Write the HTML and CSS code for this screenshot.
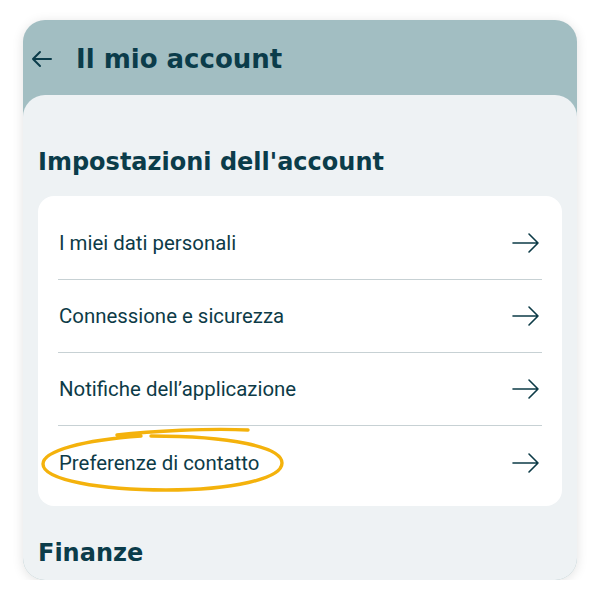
FILE: index.html
```html
<!DOCTYPE html>
<html lang="it">
<head>
<meta charset="utf-8">
<link rel="stylesheet" href="styles.css">
</head>
<body>
<div class="phone">
  <header class="topbar">
    <svg class="back" width="22" height="18" viewBox="0 0 22 18"><path d="M20 9H2M9 2L2 9l7 7" fill="none" stroke="#0b3c4a" stroke-width="2" stroke-linecap="round" stroke-linejoin="round"/></svg>
    <h1 class="title">Il mio account</h1>
  </header>
  <main class="panel">
    <h2 class="section">Impostazioni dell'account</h2>
    <ul class="card">
      <li class="row"><span>I miei dati personali</span><svg class="arrow" width="28" height="22" viewBox="0 0 28 22"><path d="M1 11h25M17 2l9 9-9 9" fill="none" stroke="#0d3b47" stroke-width="1.6" stroke-linecap="round" stroke-linejoin="round"/></svg></li>
      <li class="row"><span>Connessione e sicurezza</span><svg class="arrow" width="28" height="22" viewBox="0 0 28 22"><path d="M1 11h25M17 2l9 9-9 9" fill="none" stroke="#0d3b47" stroke-width="1.6" stroke-linecap="round" stroke-linejoin="round"/></svg></li>
      <li class="row"><span>Notifiche dell’applicazione</span><svg class="arrow" width="28" height="22" viewBox="0 0 28 22"><path d="M1 11h25M17 2l9 9-9 9" fill="none" stroke="#0d3b47" stroke-width="1.6" stroke-linecap="round" stroke-linejoin="round"/></svg></li>
      <li class="row marked"><span>Preferenze di contatto</span><svg class="arrow" width="28" height="22" viewBox="0 0 28 22"><path d="M1 11h25M17 2l9 9-9 9" fill="none" stroke="#0d3b47" stroke-width="1.6" stroke-linecap="round" stroke-linejoin="round"/></svg>
        <svg class="circle" width="250" height="70" viewBox="0 0 250 70"><path d="M207 3 C170 1 110 4 76 8 M100 9 C42 13 2 24 2 37 C2 53 60 63 125 63 C190 63 241 52 241 36 C241 20 190 9 110 9" fill="none" stroke="#f4b20c" stroke-width="3.4" stroke-linecap="round"/></svg>
      </li>
    </ul>
    <h2 class="section finance">Finanze</h2>
  </main>
</div>
</body>
</html>
```
FILE: styles.css
```css
* { box-sizing: border-box; }
html, body { margin: 0; padding: 0; background: #fff; }
body { font-family: Roboto, "Liberation Sans", sans-serif; }
.phone {
  margin: 20px 0 0 23px;
  width: 554px;
  height: 560px;
  border-radius: 22px;
  background: #a2bec2;
  overflow: hidden;
  display: flex;
  flex-direction: column;
  box-shadow: 0 2px 12px rgba(0,0,0,0.12);
}
.topbar {
  height: 75px;
  display: flex;
  align-items: center;
  padding: 2px 0 0 8px;
  gap: 23px;
  flex-shrink: 0;
}
.back { display: block; }
.title {
  margin: 0;
  font-family: "DejaVu Sans", sans-serif;
  font-weight: 700;
  font-size: 26px;
  color: #0b3c4a;
}
.panel {
  flex: 1;
  background: #eef2f4;
  border-radius: 22px 22px 0 0;
  padding: 51px 15px 0 15px;
}
.section {
  margin: 0;
  font-family: "DejaVu Sans", sans-serif;
  font-weight: 700;
  font-size: 24px;
  color: #0b3c4a;
  line-height: 32px;
}
.card {
  list-style: none;
  margin: 18px 0 0 0;
  padding: 11px 20px 0 20px;
  background: #fff;
  border-radius: 16px;
}
.row {
  position: relative;
  height: 73px;
  display: flex;
  align-items: center;
  justify-content: space-between;
  font-size: 20.4px;
  color: #0d3b47;
  border-bottom: 1px solid #c7d1d4;
  padding: 0 2px 0 1px;
}
.row:last-child { border-bottom: none; height: 80px; padding-bottom: 7px; }
.circle { position: absolute; left: -17px; top: 1px; }
.finance { margin-top: 31px; }
```
